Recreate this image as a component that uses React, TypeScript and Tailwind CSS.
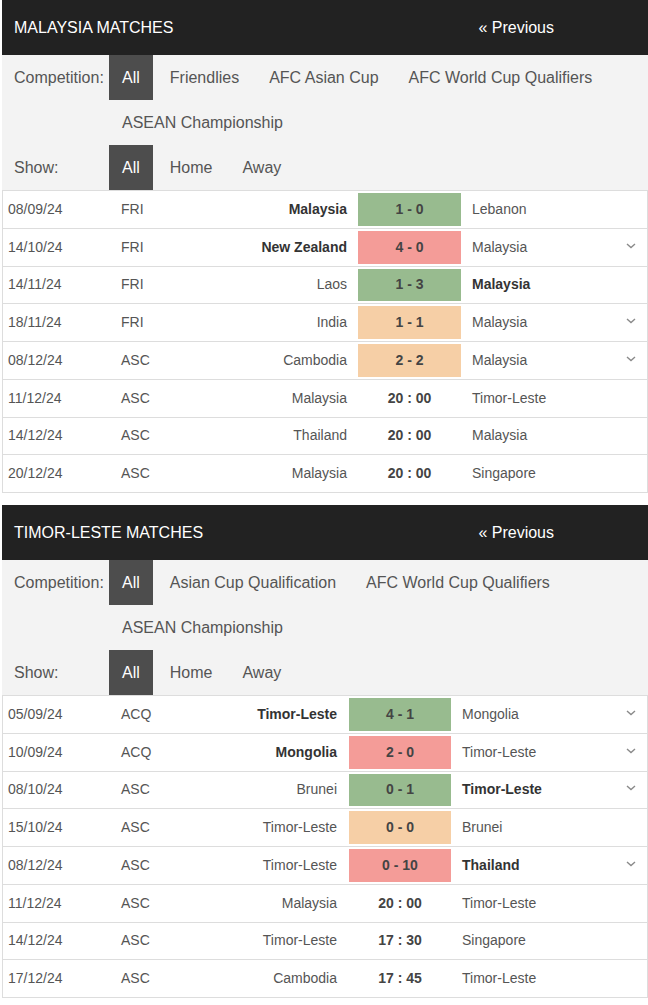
import React from "react";

type Match = {
  date: string;
  comp: string;
  home: string;
  away: string;
  score: string;
  result?: "win" | "loss" | "draw";
  bold?: "home" | "away";
  more?: boolean;
};

type Section = {
  title: string;
  filters: string[];
  homeCol: string;
  scoreCol: string;
  matches: Match[];
};

const SECTIONS: Section[] = [
  {
    title: "Malaysia Matches",
    filters: ["All", "Friendlies", "AFC Asian Cup", "AFC World Cup Qualifiers", "ASEAN Championship"],
    homeCol: "w-[148px] pr-[11px]",
    scoreCol: "w-[103px]",
    matches: [
      { date: "08/09/24", comp: "FRI", home: "Malaysia", away: "Lebanon", score: "1 - 0", result: "win", bold: "home" },
      { date: "14/10/24", comp: "FRI", home: "New Zealand", away: "Malaysia", score: "4 - 0", result: "loss", bold: "home", more: true },
      { date: "14/11/24", comp: "FRI", home: "Laos", away: "Malaysia", score: "1 - 3", result: "win", bold: "away" },
      { date: "18/11/24", comp: "FRI", home: "India", away: "Malaysia", score: "1 - 1", result: "draw", more: true },
      { date: "08/12/24", comp: "ASC", home: "Cambodia", away: "Malaysia", score: "2 - 2", result: "draw", more: true },
      { date: "11/12/24", comp: "ASC", home: "Malaysia", away: "Timor-Leste", score: "20 : 00" },
      { date: "14/12/24", comp: "ASC", home: "Thailand", away: "Malaysia", score: "20 : 00" },
      { date: "20/12/24", comp: "ASC", home: "Malaysia", away: "Singapore", score: "20 : 00" },
    ],
  },
  {
    title: "Timor-Leste Matches",
    filters: ["All", "Asian Cup Qualification", "AFC World Cup Qualifiers", "ASEAN Championship"],
    homeCol: "w-[139px] pr-[12px]",
    scoreCol: "w-[102px]",
    matches: [
      { date: "05/09/24", comp: "ACQ", home: "Timor-Leste", away: "Mongolia", score: "4 - 1", result: "win", bold: "home", more: true },
      { date: "10/09/24", comp: "ACQ", home: "Mongolia", away: "Timor-Leste", score: "2 - 0", result: "loss", bold: "home", more: true },
      { date: "08/10/24", comp: "ASC", home: "Brunei", away: "Timor-Leste", score: "0 - 1", result: "win", bold: "away", more: true },
      { date: "15/10/24", comp: "ASC", home: "Timor-Leste", away: "Brunei", score: "0 - 0", result: "draw" },
      { date: "08/12/24", comp: "ASC", home: "Timor-Leste", away: "Thailand", score: "0 - 10", result: "loss", bold: "away", more: true },
      { date: "11/12/24", comp: "ASC", home: "Malaysia", away: "Timor-Leste", score: "20 : 00" },
      { date: "14/12/24", comp: "ASC", home: "Timor-Leste", away: "Singapore", score: "17 : 30" },
      { date: "17/12/24", comp: "ASC", home: "Cambodia", away: "Timor-Leste", score: "17 : 45" },
    ],
  },
];

const RESULT_BG = {
  win: "bg-[#98bb8f]",
  loss: "bg-[#f49c98]",
  draw: "bg-[#f6cfa6]",
};

function Chevron() {
  return (
    <svg width="10" height="6" viewBox="0 0 10 6" className="mb-[3px]">
      <path d="M1 1 L5 4.5 L9 1" fill="none" stroke="#8a8a8a" strokeWidth="1.4" />
    </svg>
  );
}

function FilterItem({ label, active }: { label: string; active?: boolean }) {
  return (
    <span
      className={
        active
          ? "flex h-[45px] items-center bg-[#4d4d4d] px-[13px] text-white"
          : "flex h-[45px] items-center px-[13px] text-[#555]"
      }
    >
      {label}
    </span>
  );
}

function MatchRow({ m, section }: { m: Match; section: Section }) {
  return (
    <div className="flex h-[37.75px] items-stretch border-b border-[#ddd] text-[14px] text-[#555]">
      <div className="flex w-[112px] items-center pl-[5px]">{m.date}</div>
      <div className="flex w-[95px] items-center pl-[6px]">{m.comp}</div>
      <div
        className={`flex items-center justify-end ${section.homeCol} ${
          m.bold === "home" ? "font-bold text-[#333]" : ""
        }`}
      >
        {m.home}
      </div>
      <div className={`flex py-[2px] ${section.scoreCol}`}>
        <div
          className={`flex flex-1 items-center justify-center font-bold text-[#444] ${
            m.result ? RESULT_BG[m.result] : "text-[#333]"
          }`}
        >
          {m.score}
        </div>
      </div>
      <div
        className={`flex flex-1 items-center pl-[11px] ${
          m.bold === "away" ? "font-bold text-[#333]" : ""
        }`}
      >
        {m.away}
      </div>
      <div className="flex w-[32px] items-center justify-center">{m.more && <Chevron />}</div>
    </div>
  );
}

function MatchesBlock({ section }: { section: Section }) {
  return (
    <div>
      <div className="flex h-[55px] items-center justify-between bg-[#222] pl-[12px] pr-[94px] text-[16px] text-white">
        <span className="uppercase">{section.title}</span>
        <span>« Previous</span>
      </div>
      <div className="bg-[#f3f3f3] text-[16px]">
        <div className="flex">
          <div className="flex h-[45px] w-[107px] shrink-0 items-center pl-[12px] text-[#555]">Competition:</div>
          <div className="flex flex-wrap gap-x-[4px]">
            {section.filters.map((f, i) => (
              <FilterItem key={f} label={f} active={i === 0} />
            ))}
          </div>
        </div>
        <div className="flex">
          <div className="flex h-[45px] w-[107px] shrink-0 items-center pl-[12px] text-[#555]">Show:</div>
          <div className="flex gap-x-[4px]">
            <FilterItem label="All" active />
            <FilterItem label="Home" />
            <FilterItem label="Away" />
          </div>
        </div>
      </div>
      <div className="border-x border-t border-[#ddd] bg-white">
        {section.matches.map((m, i) => (
          <MatchRow key={i} m={m} section={section} />
        ))}
      </div>
    </div>
  );
}

export default function App() {
  return (
    <div
      className="min-h-screen bg-white pl-[2px]"
      style={{ fontFamily: '"Liberation Sans", Arial, sans-serif' }}
    >
      <div className="flex flex-col gap-[12px]">
        {SECTIONS.map((s) => (
          <MatchesBlock key={s.title} section={s} />
        ))}
      </div>
    </div>
  );
}
